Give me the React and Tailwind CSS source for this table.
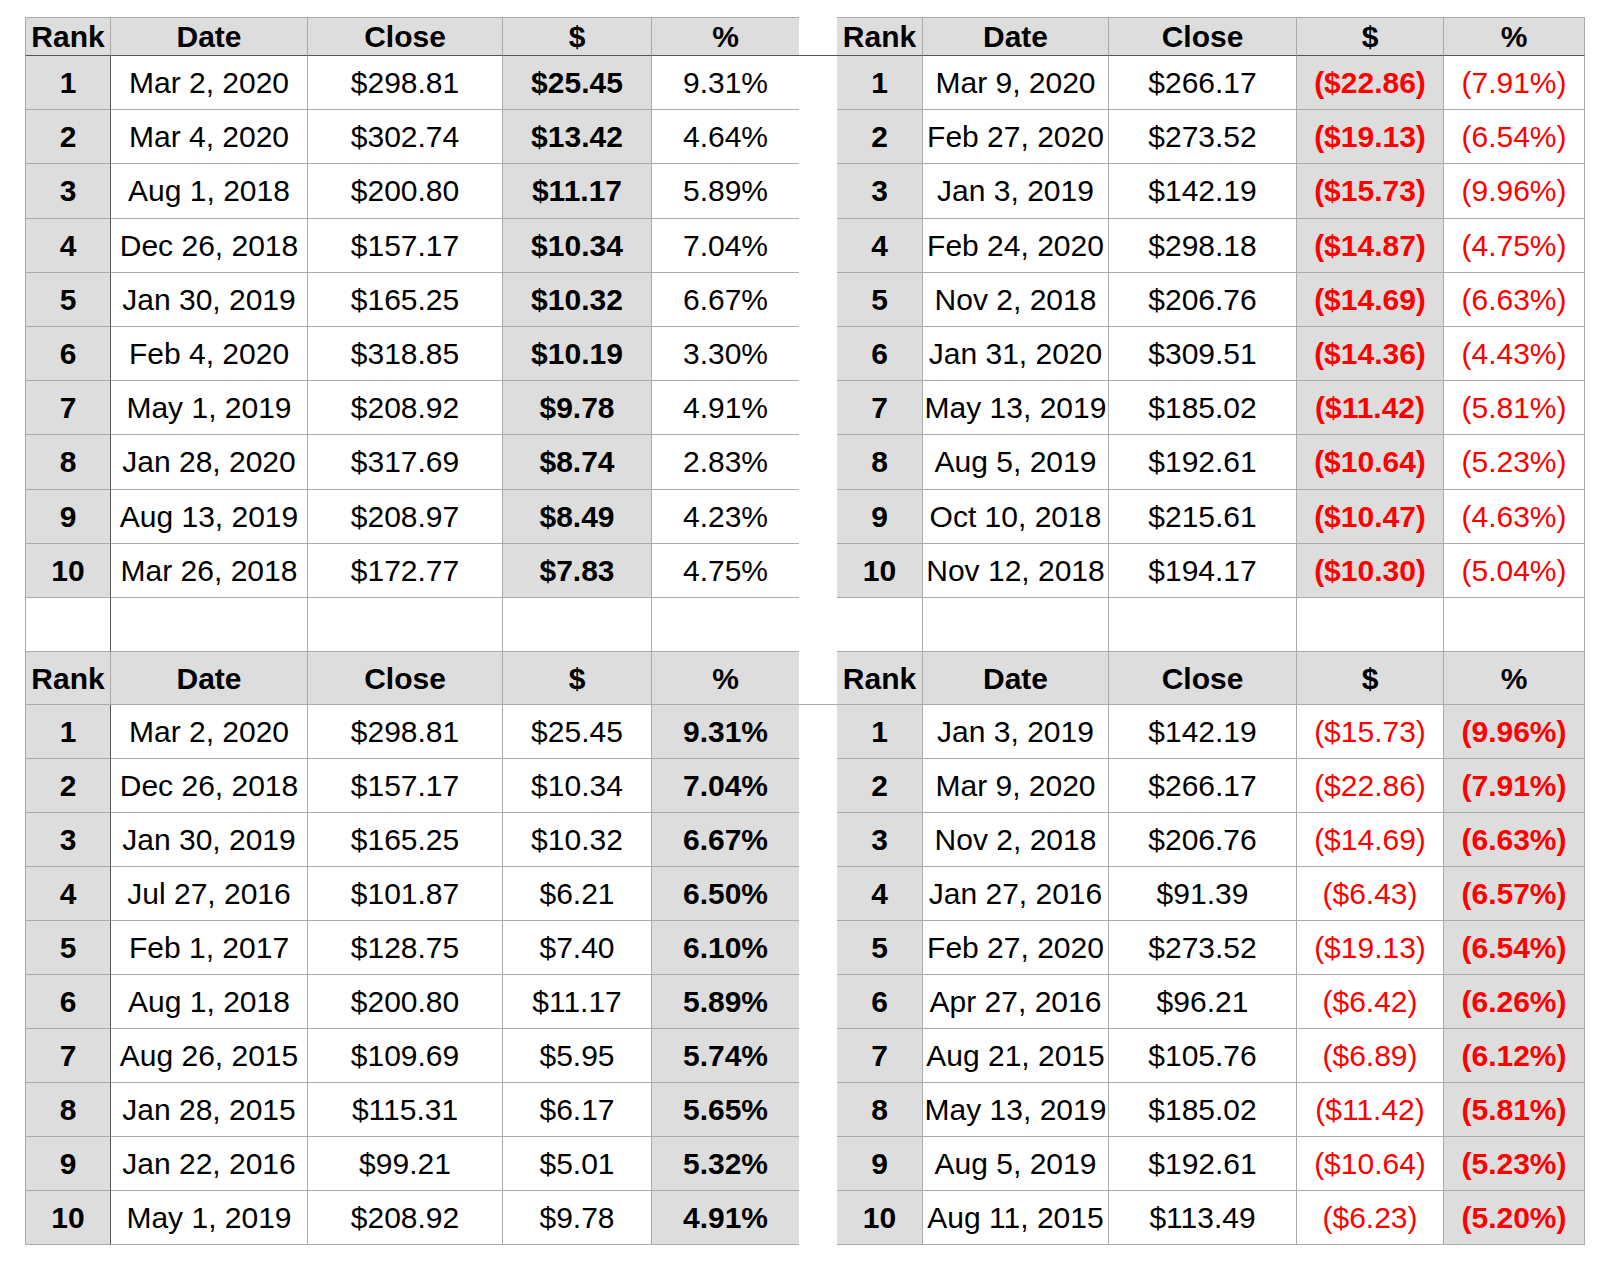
import React from 'react';

const gainsByDollar = [
  ['1', 'Mar 2, 2020', '$298.81', '$25.45', '9.31%'],
  ['2', 'Mar 4, 2020', '$302.74', '$13.42', '4.64%'],
  ['3', 'Aug 1, 2018', '$200.80', '$11.17', '5.89%'],
  ['4', 'Dec 26, 2018', '$157.17', '$10.34', '7.04%'],
  ['5', 'Jan 30, 2019', '$165.25', '$10.32', '6.67%'],
  ['6', 'Feb 4, 2020', '$318.85', '$10.19', '3.30%'],
  ['7', 'May 1, 2019', '$208.92', '$9.78', '4.91%'],
  ['8', 'Jan 28, 2020', '$317.69', '$8.74', '2.83%'],
  ['9', 'Aug 13, 2019', '$208.97', '$8.49', '4.23%'],
  ['10', 'Mar 26, 2018', '$172.77', '$7.83', '4.75%'],
];

const lossesByDollar = [
  ['1', 'Mar 9, 2020', '$266.17', '($22.86)', '(7.91%)'],
  ['2', 'Feb 27, 2020', '$273.52', '($19.13)', '(6.54%)'],
  ['3', 'Jan 3, 2019', '$142.19', '($15.73)', '(9.96%)'],
  ['4', 'Feb 24, 2020', '$298.18', '($14.87)', '(4.75%)'],
  ['5', 'Nov 2, 2018', '$206.76', '($14.69)', '(6.63%)'],
  ['6', 'Jan 31, 2020', '$309.51', '($14.36)', '(4.43%)'],
  ['7', 'May 13, 2019', '$185.02', '($11.42)', '(5.81%)'],
  ['8', 'Aug 5, 2019', '$192.61', '($10.64)', '(5.23%)'],
  ['9', 'Oct 10, 2018', '$215.61', '($10.47)', '(4.63%)'],
  ['10', 'Nov 12, 2018', '$194.17', '($10.30)', '(5.04%)'],
];

const gainsByPct = [
  ['1', 'Mar 2, 2020', '$298.81', '$25.45', '9.31%'],
  ['2', 'Dec 26, 2018', '$157.17', '$10.34', '7.04%'],
  ['3', 'Jan 30, 2019', '$165.25', '$10.32', '6.67%'],
  ['4', 'Jul 27, 2016', '$101.87', '$6.21', '6.50%'],
  ['5', 'Feb 1, 2017', '$128.75', '$7.40', '6.10%'],
  ['6', 'Aug 1, 2018', '$200.80', '$11.17', '5.89%'],
  ['7', 'Aug 26, 2015', '$109.69', '$5.95', '5.74%'],
  ['8', 'Jan 28, 2015', '$115.31', '$6.17', '5.65%'],
  ['9', 'Jan 22, 2016', '$99.21', '$5.01', '5.32%'],
  ['10', 'May 1, 2019', '$208.92', '$9.78', '4.91%'],
];

const lossesByPct = [
  ['1', 'Jan 3, 2019', '$142.19', '($15.73)', '(9.96%)'],
  ['2', 'Mar 9, 2020', '$266.17', '($22.86)', '(7.91%)'],
  ['3', 'Nov 2, 2018', '$206.76', '($14.69)', '(6.63%)'],
  ['4', 'Jan 27, 2016', '$91.39', '($6.43)', '(6.57%)'],
  ['5', 'Feb 27, 2020', '$273.52', '($19.13)', '(6.54%)'],
  ['6', 'Apr 27, 2016', '$96.21', '($6.42)', '(6.26%)'],
  ['7', 'Aug 21, 2015', '$105.76', '($6.89)', '(6.12%)'],
  ['8', 'May 13, 2019', '$185.02', '($11.42)', '(5.81%)'],
  ['9', 'Aug 5, 2019', '$192.61', '($10.64)', '(5.23%)'],
  ['10', 'Aug 11, 2015', '$113.49', '($6.23)', '(5.20%)'],
];

const headers = ['Rank', 'Date', 'Close', '$', '%'];

// column widths incl. their borders (spreadsheet gridlines)
const leftCols = [
  'w-[86px] border-l border-r',
  'w-[197px] border-r',
  'w-[195px] border-r',
  'w-[149px] border-r',
  'w-[147px]',
];
const rightCols = [
  'w-[86px] border-r',
  'w-[186px] border-r',
  'w-[188px] border-r',
  'w-[147px] border-r',
  'w-[141px] border-r',
];

const cellBase = 'flex shrink-0 items-center justify-center whitespace-nowrap border-b border-[#ababab]';
const gray = 'bg-[#dddddd]';

function HeaderRow({ first }) {
  const h = first ? 'h-[39px] border-t border-b-[#555555]' : 'h-[53.5px]';
  return (
    <div className="flex font-bold">
      {headers.map((t, i) => (
        <div key={'l' + i} className={`${cellBase} ${leftCols[i]} ${h} ${gray}`}>{t}</div>
      ))}
      <div className={`flex shrink-0 w-[38px] border-b ${first ? 'h-[39px] border-[#555555]' : 'h-[53.5px] border-[#ababab]'}`} />
      {headers.map((t, i) => (
        <div key={'r' + i} className={`${cellBase} ${rightCols[i]} ${h} ${gray}`}>{t}</div>
      ))}
    </div>
  );
}

function BlankRow() {
  return (
    <div className="flex">
      {leftCols.map((c, i) => (
        <div key={'l' + i} className={`${cellBase} ${c} h-[54px] ${i === 0 ? 'border-r-[#555555]' : ''}`} />
      ))}
      <div className="w-[38px] shrink-0" />
      {rightCols.map((c, i) => (
        <div key={'r' + i} className={`${cellBase} ${c} h-[54px]`} />
      ))}
    </div>
  );
}

function DataRow({ left, right, h, mode }) {
  // mode 'dollar': $ column highlighted, 'pct': % column highlighted
  const hl = mode === 'dollar' ? 3 : 4;
  return (
    <div className="flex">
      {left.map((t, i) => (
        <div
          key={'l' + i}
          className={`${cellBase} ${leftCols[i]} ${h} ${i === 0 ? 'border-r-[#555555] font-bold ' + gray : ''} ${i === hl ? 'font-bold ' + gray : ''}`}
        >
          {t}
        </div>
      ))}
      <div className="w-[38px] shrink-0" />
      {right.map((t, i) => (
        <div
          key={'r' + i}
          className={`${cellBase} ${rightCols[i]} ${h} ${i === 0 ? 'font-bold ' + gray : ''} ${i === hl ? 'font-bold ' + gray : ''} ${i >= 3 ? 'text-[#ff0000]' : ''}`}
        >
          {t}
        </div>
      ))}
    </div>
  );
}

export default function App() {
  return (
    <div className="w-[1606px] h-[1262px] bg-white overflow-hidden pt-[17px] pl-[25px] text-black text-[30px] leading-normal font-['Liberation_Sans',Arial,sans-serif]">
      <HeaderRow first />
      {gainsByDollar.map((row, i) => (
        <DataRow key={'a' + i} left={row} right={lossesByDollar[i]} h="h-[54.2px]" mode="dollar" />
      ))}
      <BlankRow />
      <HeaderRow />
      {gainsByPct.map((row, i) => (
        <DataRow key={'b' + i} left={row} right={lossesByPct[i]} h="h-[54px]" mode="pct" />
      ))}
    </div>
  );
}
